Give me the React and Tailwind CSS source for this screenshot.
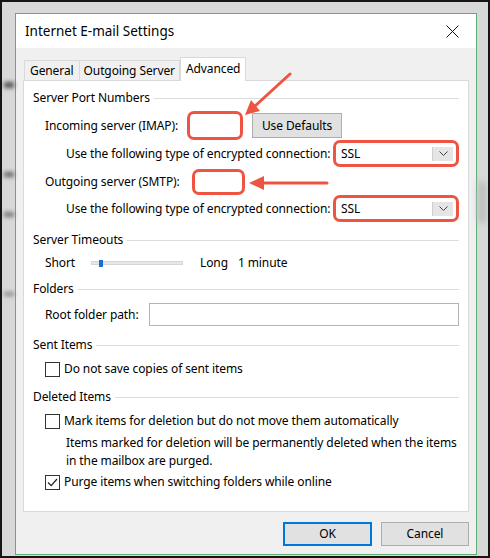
const ui = { fontFamily: '"Segoe UI", "Noto Sans", sans-serif' };

function GroupHeader({ title, className = "" }) {
  return (
    <div className={`flex items-center h-[20px] ${className}`}>
      <span>{title}</span>
      <div className="flex-1 h-px bg-[#dcdcdc] ml-[4px]" />
    </div>
  );
}

function Checkbox({ checked }) {
  return (
    <div className="w-[15px] h-[15px] border border-[#333] bg-white flex items-center justify-center shrink-0">
      {checked && (
        <svg width="11" height="11" viewBox="0 0 11 11">
          <path d="M1 5.5 L4.2 8.7 L10 2" fill="none" stroke="#222" strokeWidth="1.2" />
        </svg>
      )}
    </div>
  );
}

function SslSelect() {
  return (
    <div className="w-[126px] h-[27px] border-[3px] border-[#ef5443] rounded-[7px] bg-white flex items-center pl-[5px] pr-[3px] shrink-0">
      <span className="flex-1">SSL</span>
      <div className="w-[21px] h-[14px] bg-[#e5e5e5] border-l border-[#cfcfcf] flex items-center justify-center">
        <svg width="9" height="5" viewBox="0 0 9 5">
          <path d="M0.5 0.5 L4.5 4.5 L8.5 0.5" fill="none" stroke="#444" strokeWidth="1" />
        </svg>
      </div>
    </div>
  );
}

export default function App() {
  return (
    <div className="w-[490px] h-[558px] relative overflow-hidden bg-[#d8d8d8] border-2 border-[#151515] text-black text-[12px] tracking-[-0.1px] whitespace-nowrap" style={ui}>
      {/* blurred desktop behind the dialog */}
      <div className="absolute left-[2px] top-[80px] w-[10px] h-[6px] bg-[#555] blur-[2px]" />
      <div className="absolute left-[2px] top-[170px] w-[10px] h-[5px] bg-[#666] blur-[2px]" />
      <div className="absolute left-[2px] top-[210px] w-[10px] h-[5px] bg-[#777] blur-[2px]" />
      <div className="absolute left-[2px] top-[290px] w-[10px] h-[4px] bg-[#888] blur-[2px]" />
      <div className="absolute right-[2px] top-[180px] w-[8px] h-[40px] bg-[#bbb] blur-[3px]" />

      <div className="ml-[13px] mt-[11px] w-[462px] h-[542px] border border-[#5fae74] flex flex-col bg-[#f0f0f0]">
        {/* title bar */}
        <div className="h-[34px] bg-white flex items-center justify-between pl-[9px] pr-[17px] shrink-0">
          <span className="text-[13.5px] tracking-normal">Internet E-mail Settings</span>
          <svg width="13" height="13" viewBox="0 0 13 13">
            <path d="M0.5 0.5 L12.5 12.5 M12.5 0.5 L0.5 12.5" stroke="#111" strokeWidth="1" />
          </svg>
        </div>

        <div className="flex-1 pt-[9px] pl-[7px] pr-[7px] flex flex-col">
          {/* tabs */}
          <div className="flex items-end h-[23px] pl-px">
            <div className="h-[20px] px-[5px] border border-b-0 border-[#d9d9d9] bg-[#f0f0f0] flex items-center">General</div>
            <div className="h-[20px] px-[4px] border border-b-0 border-l-0 border-[#d9d9d9] bg-[#f0f0f0] flex items-center">Outgoing Server</div>
            <div className="h-[24px] px-[5px] border border-b-0 border-[#d9d9d9] bg-white flex items-center -mb-px relative z-10 pb-[2px]">Advanced</div>
          </div>

          {/* tab page */}
          <div className="h-[432px] border border-[#d9d9d9] bg-white pl-[9px] pr-[9px]">
            <GroupHeader title="Server Port Numbers" className="mt-[7px]" />

            <div className="flex items-center h-[29px] mt-[3px] pl-[12px]">
              <span className="w-[142px]">Incoming server (IMAP):</span>
              <div className="w-[56px] h-[29px] border-[3px] border-[#ef5443] rounded-[7px] bg-white" />
              <button className="ml-[9px] w-[90px] h-[25px] bg-[#e1e1e1] border border-[#adadad]">Use Defaults</button>
            </div>

            <div className="flex items-center h-[27px] pl-[33px]">
              <span className="w-[271px]">Use the following type of encrypted connection:</span>
              <SslSelect />
            </div>

            <div className="flex items-center h-[26px] mt-[2px] pl-[12px]">
              <span className="w-[147px]">Outgoing server (SMTP):</span>
              <div className="w-[53px] h-[26px] border-[3px] border-[#ef5443] rounded-[7px] bg-white" />
            </div>

            <div className="flex items-center h-[27px] pl-[33px]">
              <span className="w-[271px]">Use the following type of encrypted connection:</span>
              <SslSelect />
            </div>

            <GroupHeader title="Server Timeouts" className="mt-[8px]" />

            <div className="flex items-center h-[20px] mt-[3px] pl-[12px]">
              <span className="w-[46px]">Short</span>
              <div className="relative w-[92px] h-[4px] bg-[#e7e7e7] border border-[#d6d6d6]">
                <div className="absolute left-[7px] -top-[2px] w-[4px] h-[7px] bg-[#1b6fd1]" />
              </div>
              <span className="ml-[17px]">Long</span>
              <span className="ml-[10px]">1 minute</span>
            </div>

            <GroupHeader title="Folders" className="mt-[6px]" />

            <div className="flex items-center h-[23px] mt-[4px] pl-[12px]">
              <span className="w-[104px]">Root folder path:</span>
              <div className="w-[310px] h-[23px] border border-[#b4b4b4] bg-white" />
            </div>

            <GroupHeader title="Sent Items" className="mt-[9px]" />

            <div className="flex items-center h-[20px] mt-[4px] pl-[12px] gap-[4px]">
              <Checkbox />
              <span>Do not save copies of sent items</span>
            </div>

            <GroupHeader title="Deleted Items" className="mt-[8px]" />

            <div className="flex items-center h-[20px] mt-[4px] pl-[12px] gap-[4px]">
              <Checkbox />
              <span>Mark items for deletion but do not move them automatically</span>
            </div>

            <p className="mt-[3px] pl-[33px] leading-[18px]">
              Items marked for deletion will be permanently deleted when the items
              <br />
              in the mailbox are purged.
            </p>

            <div className="flex items-center h-[20px] mt-[2px] pl-[12px] gap-[4px]">
              <Checkbox checked />
              <span>Purge items when switching folders while online</span>
            </div>
          </div>

          {/* dialog buttons */}
          <div className="flex justify-end gap-[9px] mt-[10px]">
            <button className="w-[89px] h-[24px] bg-[#e1e1e1] border-2 border-[#0078d7]">OK</button>
            <button className="w-[88px] h-[24px] bg-[#e1e1e1] border border-[#adadad]">Cancel</button>
          </div>
        </div>
      </div>

      {/* callout arrows */}
      <svg className="absolute left-0 top-0 pointer-events-none" width="490" height="558" viewBox="0 0 490 558">
        <path d="M288 72 L253 104" stroke="#ef5443" strokeWidth="3" strokeLinecap="round" />
        <path d="M243 113 L258 109 L249 98 Z" fill="#ef5443" />
        <path d="M325 181 L260 181" stroke="#ef5443" strokeWidth="3" strokeLinecap="round" />
        <path d="M247 181 L262 174 L262 188 Z" fill="#ef5443" />
      </svg>
    </div>
  );
}
